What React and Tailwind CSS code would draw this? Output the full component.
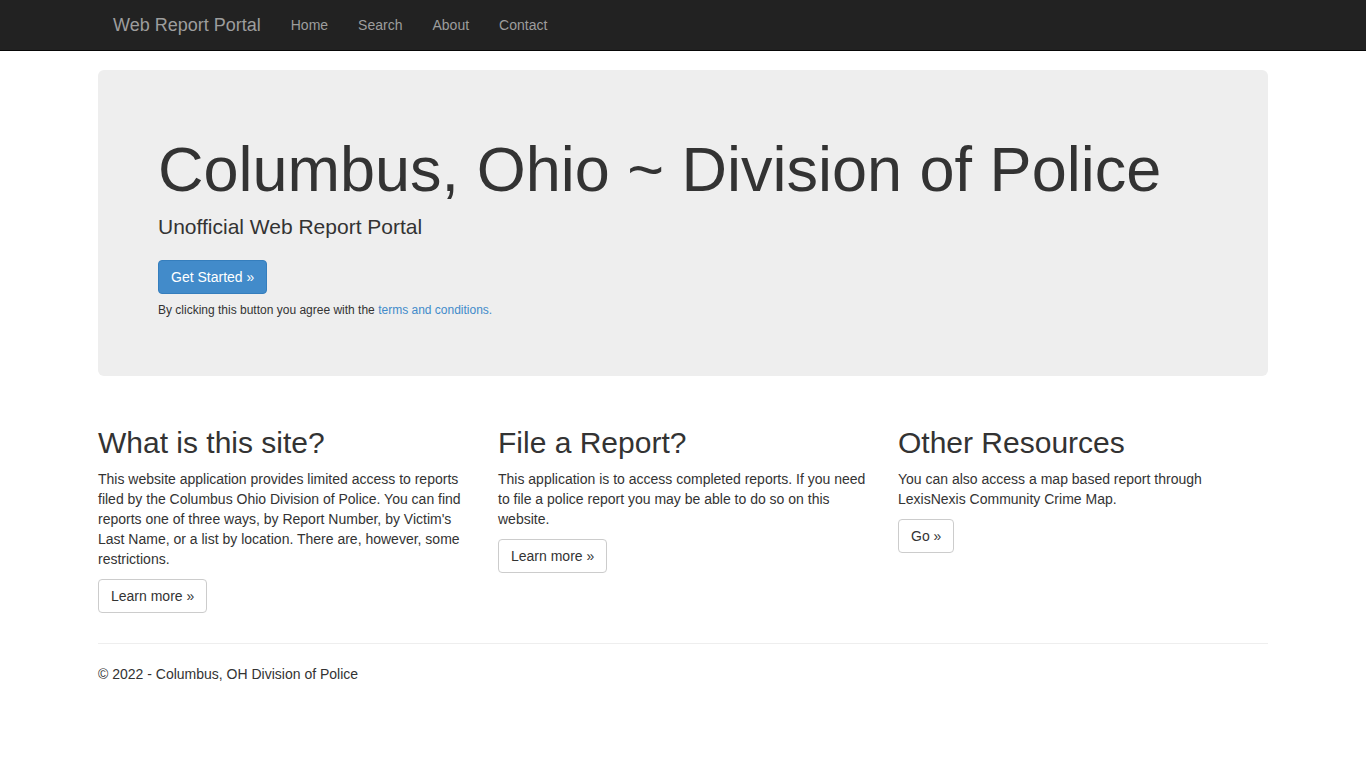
import React from 'react'

const NAV_LINKS = ['Home', 'Search', 'About', 'Contact']

const COLUMNS = [
  {
    title: 'What is this site?',
    body: "This website application provides limited access to reports filed by the Columbus Ohio Division of Police. You can find reports one of three ways, by Report Number, by Victim's Last Name, or a list by location. There are, however, some restrictions.",
    button: 'Learn more »',
  },
  {
    title: 'File a Report?',
    body: 'This application is to access completed reports. If you need to file a police report you may be able to do so on this website.',
    button: 'Learn more »',
  },
  {
    title: 'Other Resources',
    body: 'You can also access a map based report through LexisNexis Community Crime Map.',
    button: 'Go »',
  },
]

function Navbar() {
  return (
    <nav className="bg-[#222] border-b border-[#080808]">
      <div className="w-[1170px] mx-auto flex items-center h-[50px]">
        <a href="#" className="px-[15px] py-[15px] text-[18px] leading-[20px] text-[#9d9d9d]">
          Web Report Portal
        </a>
        <ul className="flex">
          {NAV_LINKS.map(link => (
            <li key={link}>
              <a href="#" className="block px-[15px] py-[15px] text-[14px] leading-[20px] text-[#9d9d9d]">
                {link}
              </a>
            </li>
          ))}
        </ul>
      </div>
    </nav>
  )
}

function Jumbotron() {
  return (
    <div className="bg-[#eee] rounded-[6px] px-[60px] pt-[48px] pb-[48px] h-[306px]">
      <h1 className="text-[63px] leading-[1.1] mt-[17px] mb-[8px] text-[#333]">
        Columbus, Ohio ~ Division of Police
      </h1>
      <p className="text-[21px] leading-[30px] mb-[18px]">Unofficial Web Report Portal</p>
      <a
        href="#"
        className="inline-block bg-[#428bca] border border-[#357ebd] text-white text-[14px] leading-[20px] px-[12px] py-[6px] rounded-[4px]"
      >
        Get Started »
      </a>
      <p className="text-[12px] leading-[17px] mt-[8px]">
        By clicking this button you agree with the{' '}
        <a href="#" className="text-[#428bca]">terms and conditions.</a>
      </p>
    </div>
  )
}

export default function App() {
  return (
    <div className="min-h-screen bg-white text-[#333] text-[14px] leading-[20px]" style={{ fontFamily: '"Liberation Sans", Arial, Helvetica, sans-serif' }}>
      <Navbar />
      <div className="w-[1170px] mx-auto pt-[19px]">
        <Jumbotron />

        <div className="grid grid-cols-[370px_370px_370px] gap-[30px] mt-[50px]">
          {COLUMNS.map(col => (
            <div key={col.title}>
              <h2 className="text-[30px] leading-[33px] mb-[10px]">{col.title}</h2>
              <p className="mb-[10px]">{col.body}</p>
              <a
                href="#"
                className="inline-block bg-white border border-[#ccc] text-[#333] text-[14px] leading-[20px] px-[12px] py-[6px] rounded-[4px]"
              >
                {col.button}
              </a>
            </div>
          ))}
        </div>

        <hr className="border-0 border-t border-[#eee] mt-[30px] mb-[20px]" />
        <footer>
          <p>© 2022 - Columbus, OH Division of Police</p>
        </footer>
      </div>
    </div>
  )
}
